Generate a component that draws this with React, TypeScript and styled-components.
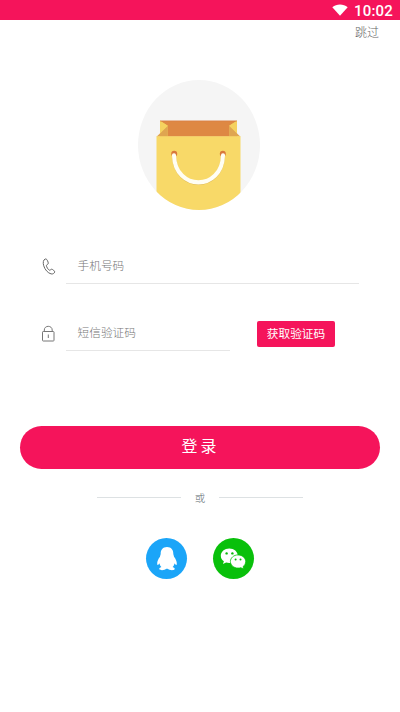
import React from 'react';
import styled, { createGlobalStyle } from 'styled-components';

const GlobalStyle = createGlobalStyle`
  * { box-sizing: border-box; }
  body {
    margin: 0;
    background: #fff;
    font-family: "Noto Sans CJK SC", sans-serif;
    font-weight: 300;
  }
  button { border: 0; padding: 0; margin: 0; font: inherit; background: none; }
  svg { display: block; flex: none; }
`;

const Screen = styled.main`
  width: 100%;
  height: 712px;
  overflow: hidden;
  background: #fff;
  display: flex;
  flex-direction: column;
`;

const StatusBar = styled.div`
  flex: none;
  height: 20px;
  display: flex;
  align-items: center;
  justify-content: flex-end;
  gap: 6px;
  padding: 0 7px 1px 0;
  background: #f5145b;
  color: #fff;
`;

const Clock = styled.span`
  font: 500 15px/22px Roboto, sans-serif;
  letter-spacing: 0.2px;
  padding-top: 3px;
`;

const TopBar = styled.header`
  height: 24px;
  display: flex;
  justify-content: flex-end;
  padding-right: 21px;
`;

const SkipButton = styled.button`
  height: 24px;
  line-height: 24px;
  font-size: 12px;
  color: #666;
`;

const LogoArea = styled.div`
  display: flex;
  justify-content: center;
  padding: 35px 2px 0 0;
  height: 210px;
`;

const Form = styled.form`
  display: flex;
  flex-direction: column;
  padding: 0 41px 0 40px;
`;

const FieldRow = styled.div`
  display: flex;
  height: 30px;
  margin-bottom: 37px;
`;

const IconSlot = styled.div`
  width: 26px;
  padding-top: 4px;
`;

const Field = styled.div<{ $width: number }>`
  width: ${({ $width }) => $width}px;
  height: 30px;
  padding-left: 11.5px;
  border-bottom: 1px solid #e6e6e6;
  font-size: 11.7px;
  line-height: 22px;
  color: #777;
`;

const CodeButton = styled.button`
  width: 78px;
  height: 26px;
  margin-left: 27px;
  padding-bottom: 2px;
  border-radius: 2px;
  background: #f5145b;
  color: #fff;
  font-size: 11.7px;
  font-weight: 400;
  line-height: 24px;
  white-space: nowrap;
`;

const LoginButton = styled.button`
  height: 43px;
  margin: 38px 20px 0;
  border-radius: 22px;
  background: #f5145b;
  color: #fff;
  font-size: 16px;
  font-weight: 400;
  line-height: 39px;
  word-spacing: -0.5px;
  padding: 0 2px 4px 0;
`;

const Divider = styled.div`
  display: flex;
  align-items: center;
  justify-content: center;
  height: 20px;
  margin-top: 19px;
  color: #5d6a70;
  font-size: 10.5px;
  line-height: 20px;
`;

const Rule = styled.span`
  width: 84px;
  height: 1px;
  background: #dde1e3;
  margin-bottom: 1px;
`;

const DividerLabel = styled.span`
  width: 38px;
  text-align: center;
`;

const SocialRow = styled.div`
  display: flex;
  justify-content: center;
  gap: 26px;
  margin-top: 30px;
  padding-right: 1px;
`;

const SocialButton = styled.button<{ $color: string }>`
  width: 41px;
  height: 41px;
  border-radius: 50%;
  background: ${({ $color }) => $color};
`;

const Wifi = () => (
  <svg width="16" height="12" viewBox="0 0 16 12">
    <path d="M.3 3.2C4.7-.5 11.3-.5 15.7 3.2L8 11.7Z" fill="#fff" />
  </svg>
);

const BagLogo = () => (
  <svg width="124" height="132" viewBox="137 79 124 132">
    <defs>
      <clipPath id="disc">
        <ellipse cx="199" cy="145" rx="61" ry="65" />
      </clipPath>
    </defs>
    <ellipse cx="199" cy="145" rx="61" ry="65" fill="#f5f5f5" />
    <g clipPath="url(#disc)">
      <path d="M160 120.8h77v16h-77z" fill="#de8843" />
      <path d="M160 120.8l7.8 5v11H160z" fill="#f3ca5b" />
      <path d="M237 120.8l-7.8 5v11h7.8z" fill="#f3ca5b" />
      <path d="M156.5 136.8l11.3-11v11zM240.5 136.8l-11.3-11v11z" fill="#dfa550" />
      <path d="M160 120.8v12.5l7.8-7.5zM237 120.8v12.5l-7.8-7.5z" fill="#f5d15f" />
      <path d="M160 121h77" stroke="#d67d43" strokeWidth=".6" />
      <path d="M156.5 136.3h84v76h-84z" fill="#f8d968" />
      <circle cx="174.2" cy="153.8" r="3" fill="#d9793b" />
      <circle cx="222.8" cy="153.8" r="3" fill="#d9793b" />
      <path d="M174 155.8C175 192 222 192 223 155.8" fill="none" stroke="#c99b42" strokeWidth="4" strokeLinecap="round" opacity=".5" />
      <path d="M174 155.2C175 191.4 222 191.4 223 155.2" fill="none" stroke="#fffef4" strokeWidth="4.1" strokeLinecap="round" />
    </g>
  </svg>
);

const PhoneIcon = () => (
  <svg width="16" height="18" viewBox="0 0 16 18" fill="none" stroke="#666" strokeWidth="1" strokeLinejoin="round">
    <path d="M5.2 1C3.2 1.9 2.8 4.6 3.7 7.7C4.8 11.5 7.8 15.1 11.1 15.9C12.8 16.3 14.5 15.3 14.7 13.9C14.8 13.1 12.6 11.2 11.7 11.2C10.6 11.3 10.3 12.5 9.4 12.2C8.1 11.7 6.5 9 6.4 7.5C6.4 6.6 8.3 6.5 8.3 5.3C8.3 4.1 7 1.2 6.1 1C5.8 .9 5.5 .9 5.2 1Z" />
  </svg>
);

const LockIcon = () => (
  <svg width="16" height="18" viewBox="0 0 16 18" fill="none" stroke="#777" strokeWidth="1">
    <rect x="2.5" y="6.5" width="11.5" height="9.5" rx=".7" />
    <path d="M4.3 6.5V5C4.3 .1 12.2 .1 12.2 5V6.5M8.3 9.5v3.5" />
  </svg>
);

const Penguin = () => (
  <svg width="41" height="41" viewBox="0 0 41 41" fill="#fff">
    <path d="M21 9C16.8 9 14.6 11.9 14.7 15.8C14.7 17 14 17.5 14 18.8C12.4 20.8 11 23.5 11.2 26C11.3 27.8 12.5 26.7 13.5 25.2C13.8 26.9 14.4 28 15.4 29C14 29.5 12.8 30.3 13.4 31.3C14.4 32.8 19 32.2 20.4 30.8H21.6C23 32.2 27.6 32.8 28.6 31.3C29.2 30.3 28 29.5 26.6 29C27.6 28 28.2 26.9 28.5 25.2C29.5 26.7 30.7 27.8 30.8 26C31 23.5 29.6 20.8 28 18.8C28 17.5 27.3 17 27.3 15.8C27.4 11.9 25.2 9 21 9Z" />
  </svg>
);

const ChatBubbles = () => (
  <svg width="41" height="41" viewBox="0 0 41 41" fill="#fff">
    <path d="M16.3 10.5C11.6 10.5 7.8 13.7 7.8 17.7C7.8 20 9 21.9 10.9 23.2L9.9 25.9L13.1 24.4C14.2 24.7 15.3 24.9 16.3 24.9C21 24.9 24.8 21.7 24.8 17.7S21 10.5 16.3 10.5Z" />
    <path d="M25 16.9C20.8 16.9 17.4 19.9 17.4 23.5S20.8 30.1 25 30.1C26 30.1 26.9 30 27.8 29.7L30.8 31.1L30 28.7C31.6 27.5 32.7 25.6 32.7 23.5C32.7 19.9 29.2 16.9 25 16.9Z" stroke="#09c00b" strokeWidth=".8" />
    <g fill="#09b80b">
      <circle cx="13.6" cy="15.4" r="1.2" />
      <circle cx="19.4" cy="15.4" r="1.2" />
      <circle cx="22.6" cy="21.4" r="1" />
      <circle cx="27.5" cy="21.4" r="1" />
    </g>
  </svg>
);

export default function App() {
  return (
    <>
      <GlobalStyle />
      <Screen>
        <StatusBar>
          <Wifi />
          <Clock>10:02</Clock>
        </StatusBar>
        <TopBar>
          <SkipButton type="button">跳过</SkipButton>
        </TopBar>
        <LogoArea>
          <BagLogo />
        </LogoArea>
        <Form>
          <FieldRow>
            <IconSlot><PhoneIcon /></IconSlot>
            <Field $width={293}>手机号码</Field>
          </FieldRow>
          <FieldRow>
            <IconSlot><LockIcon /></IconSlot>
            <Field $width={164}>短信验证码</Field>
            <CodeButton type="button">获取验证码</CodeButton>
          </FieldRow>
        </Form>
        <LoginButton type="button">登 录</LoginButton>
        <Divider>
          <Rule />
          <DividerLabel>或</DividerLabel>
          <Rule />
        </Divider>
        <SocialRow>
          <SocialButton type="button" $color="#1ba5f8" aria-label="QQ"><Penguin /></SocialButton>
          <SocialButton type="button" $color="#09c00b" aria-label="WeChat"><ChatBubbles /></SocialButton>
        </SocialRow>
      </Screen>
    </>
  );
}
